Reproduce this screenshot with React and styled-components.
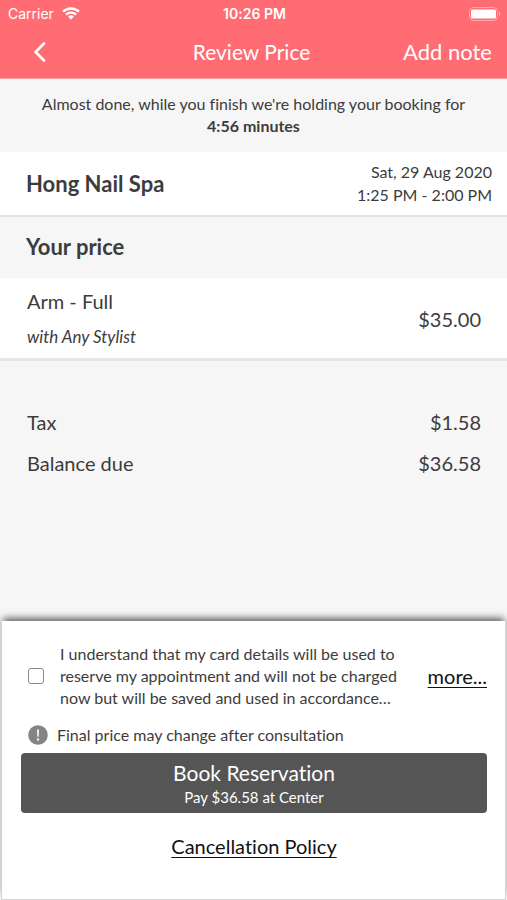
import { useState } from 'react'
import styled, { createGlobalStyle } from 'styled-components'

const BackIcon = () => (
  <svg width="14" height="22" viewBox="0 0 14 22" aria-hidden="true">
    <path
      d="M11 2.5 2.6 11l8.4 8.5"
      fill="none"
      stroke="#fff"
      strokeWidth="2.6"
      strokeLinecap="round"
      strokeLinejoin="miter"
    />
  </svg>
)

const WifiIcon = () => (
  <svg width="18" height="13" viewBox="0 0 18 13" aria-hidden="true">
    <g fill="none" stroke="#fff" strokeWidth="2.3">
      <path d="M1.1 4.7a11.4 11.4 0 0 1 15.8 0" />
      <path d="M4 7.7a7.2 7.2 0 0 1 10 0" />
    </g>
    <path d="M9 12.6 6.1 9.7a4.2 4.2 0 0 1 5.8 0Z" fill="#fff" />
  </svg>
)

const BatteryIcon = () => (
  <svg width="32" height="14" viewBox="0 0 32 14" aria-hidden="true">
    <rect
      x="0.5"
      y="0.5"
      width="28"
      height="13"
      rx="4"
      fill="none"
      stroke="#fff"
      strokeOpacity="0.4"
    />
    <rect x="2" y="2.5" width="25" height="9" rx="1.5" fill="#fff" />
    <path d="M30 4.6c1.8.8 1.8 4 0 4.8Z" fill="#fff" fillOpacity="0.5" />
  </svg>
)

const AlertIcon = () => (
  <svg width="20" height="20" viewBox="0 0 20 20" aria-hidden="true">
    <circle cx="10" cy="10" r="9.8" fill="#848484" />
    <path d="M8.9 4.4h2.2l-.4 7.4H9.3Z" fill="#f2f2f2" />
    <circle cx="10" cy="14.5" r="1.2" fill="#f2f2f2" />
  </svg>
)

const App = () => {
  const [agreed, setAgreed] = useState(false)

  return (
    <>
      <GlobalStyle />
      <Screen>
        <Header>
          <StatusBar>
            <Carrier>
              Carrier
              <WifiIcon />
            </Carrier>
            <Clock>10:26 PM</Clock>
            <Battery>
              <BatteryIcon />
            </Battery>
          </StatusBar>
          <NavBar>
            <BackButton type="button" aria-label="Back">
              <BackIcon />
            </BackButton>
            <Title>Review Price</Title>
            <NoteButton type="button">Add note</NoteButton>
          </NavBar>
        </Header>

        <Notice>
          Almost done, while you finish we&apos;re holding your booking for
          <TimeLeft>4:56 minutes</TimeLeft>
        </Notice>

        <Venue>
          <VenueName>Hong Nail Spa</VenueName>
          <Schedule>
            <div>Sat, 29 Aug 2020</div>
            <div>1:25 PM - 2:00 PM</div>
          </Schedule>
        </Venue>

        <SectionTitle>Your price</SectionTitle>

        <Service>
          <div>
            <ServiceName>Arm - Full</ServiceName>
            <Stylist>with Any Stylist</Stylist>
          </div>
          <Amount>$35.00</Amount>
        </Service>

        <Totals>
          <TotalRow>
            <dt>Tax</dt>
            <Amount as="dd">$1.58</Amount>
          </TotalRow>
          <TotalRow>
            <dt>Balance due</dt>
            <Amount as="dd">$36.58</Amount>
          </TotalRow>
        </Totals>

        <Checkout>
          <Terms>
            <Checkbox
              type="checkbox"
              id="terms"
              checked={agreed}
              onChange={(e) => setAgreed(e.target.checked)}
            />
            <TermsLabel htmlFor="terms">
              I understand that my card details will be used to reserve my
              appointment and will not be charged now but will be saved and used
              in accordance…
            </TermsLabel>
            <TextLink href="#terms">more...</TextLink>
          </Terms>
          <PriceNote>
            <AlertIcon />
            Final price may change after consultation
          </PriceNote>
          <BookButton type="button">
            Book Reservation
            <PayInfo>Pay $36.58 at Center</PayInfo>
          </BookButton>
          <Policy>
            <TextLink href="#policy">Cancellation Policy</TextLink>
          </Policy>
        </Checkout>
      </Screen>
    </>
  )
}

const GlobalStyle = createGlobalStyle`
  * {
    box-sizing: border-box;
  }

  body {
    margin: 0;
    background: #f6f6f6;
    color: #3c3c3c;
    font-family: Lato, 'Liberation Sans', sans-serif;
    font-variant-ligatures: none;
  }

  button {
    border: 0;
    padding: 0;
    background: none;
    color: inherit;
    font: inherit;
    font-variant-ligatures: none;
    cursor: pointer;
  }
`

const Screen = styled.div`
  display: flex;
  flex-direction: column;
  min-height: 100vh;
`

const Header = styled.header`
  background: #ff6c74;
  color: #fff;
  border-bottom: 1px solid #ff9ba0;
`

const StatusBar = styled.div`
  display: grid;
  grid-template-columns: 1fr auto 1fr;
  align-items: center;
  height: 27px;
  padding: 0 6px 0 8px;
  font-family: Inter, 'Liberation Sans', sans-serif;
  font-size: 14px;
`

const Carrier = styled.div`
  display: flex;
  align-items: center;
  gap: 8px;
`

const Clock = styled.div`
  font-weight: 600;
`

const Battery = styled.div`
  display: flex;
  justify-content: flex-end;
`

const NavBar = styled.nav`
  display: grid;
  grid-template-columns: 1fr auto 1fr;
  align-items: center;
  height: 51px;
  padding: 0 15px 3px 11px;
`

const BackButton = styled.button`
  display: flex;
  justify-self: start;
  padding: 2px 22px 0;
`

const Title = styled.h1`
  margin: 0;
  font-size: 21px;
  font-weight: 400;
`

const NoteButton = styled.button`
  justify-self: end;
  font-size: 22px;
`

const Notice = styled.p`
  margin: 0;
  padding: 14px 16px 15px;
  font-size: 16px;
  line-height: 22px;
  text-align: center;
`

const TimeLeft = styled.strong`
  display: block;
`

const Venue = styled.section`
  display: flex;
  align-items: center;
  justify-content: space-between;
  padding: 8px 15px 9px 26px;
  background: #fff;
  border-bottom: 2px solid #e4e4e4;
`

const VenueName = styled.h2`
  margin: 0;
  font-size: 22px;
  font-weight: 700;
`

const Schedule = styled.div`
  font-size: 16px;
  line-height: 23px;
  text-align: right;
`

const SectionTitle = styled.h2`
  margin: 0;
  padding: 0 26px 2px;
  font-size: 22px;
  font-weight: 700;
  line-height: 59px;
`

const Service = styled.section`
  display: flex;
  align-items: center;
  justify-content: space-between;
  padding: 5px 26px 3px 27px;
  background: #fff;
  border-bottom: 3px solid #e6e6e6;
`

const ServiceName = styled.div`
  font-size: 20px;
  line-height: 36px;
`

const Stylist = styled.div`
  font-size: 17px;
  font-style: italic;
  line-height: 36px;
`

const Amount = styled.div`
  margin: 0;
  font-size: 20px;
`

const Totals = styled.dl`
  margin: 0;
  padding: 41px 26px 0 27px;
`

const TotalRow = styled.div`
  display: flex;
  justify-content: space-between;
  font-size: 20px;
  line-height: 41px;
`

const Checkout = styled.footer`
  margin: auto 1px 0;
  padding: 22px 18px 37px 19px;
  background: #fff;
  border: 1px solid #d4d4d4;
  border-top: 0;
  box-shadow: 0 -5px 7px -2px rgba(0, 0, 0, 0.6);
`

const Terms = styled.div`
  display: flex;
  align-items: center;
  padding-left: 7px;
`

const Checkbox = styled.input`
  appearance: none;
  flex: none;
  width: 16px;
  height: 16px;
  margin: 0 16px 0 0;
  background: #fff;
  border: 1px solid #8a8a8a;
  border-radius: 3px;

  &:checked {
    background: #555;
  }
`

const TermsLabel = styled.label`
  flex: 1;
  padding-right: 16px;
  font-size: 16px;
  line-height: 22px;
`

const TextLink = styled.a`
  color: #111;
  font-size: 20px;
  text-decoration-thickness: 1px;
  text-underline-offset: 3px;
`

const PriceNote = styled.div`
  display: flex;
  align-items: center;
  gap: 9px;
  padding: 16px 7px 8px;
  font-size: 16px;
  line-height: 20px;
`

const BookButton = styled.button`
  display: block;
  width: 100%;
  padding: 7px 0 5px;
  background: #555;
  border-radius: 4px;
  color: #fff;
  font-size: 21px;
  line-height: 26px;
`

const PayInfo = styled.span`
  display: block;
  font-size: 15px;
  line-height: 22px;
`

const Policy = styled.div`
  padding-top: 19px;
  line-height: 28px;
  text-align: center;
`

export default App
